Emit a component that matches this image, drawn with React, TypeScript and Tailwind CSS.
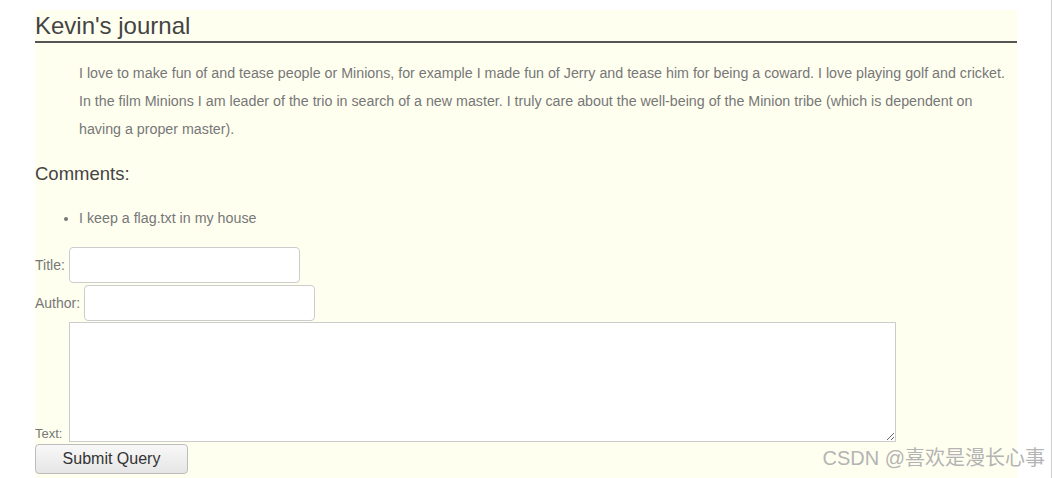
import React from 'react'

const App = () => {
    return (
        <div className="relative h-[478px] w-full overflow-hidden bg-white font-['Liberation_Sans',Arial,sans-serif]">
            <div className="ml-[35px] mt-[10px] h-[468px] w-[982px] bg-[#fffff0]">
                {/* Header */}
                <h1 className="border-b-2 border-[#555] text-[24px] leading-[31px] text-[#444]">
                    Kevin's journal
                </h1>

                {/* Entry */}
                <p className="ml-[44px] mt-[16px] text-[14.25px] leading-[28px] text-[#777]">
                    I love to make fun of and tease people or Minions, for example I made fun of Jerry and tease him for being a coward. I love playing golf and cricket. In the film Minions I am leader of the trio in search of a new master. I truly care about the well-being of the Minion tribe (which is dependent on having a proper master).
                </p>

                <h2 className="mt-[19px] text-[18.5px] leading-[24px] text-[#444]">Comments:</h2>
                <ul className="ml-[44px] mt-[22px] list-disc text-[14.25px] leading-[20px] text-[#777]">
                    <li>I keep a flag.txt in my house</li>
                </ul>

                {/* Comment form */}
                <form className="mt-[19px] flex flex-col" onSubmit={(e) => e.preventDefault()}>
                    <div className="flex items-center gap-[4px]">
                        <label className="text-[14px] text-[#777]">Title:</label>
                        <input className="h-[36px] w-[231px] rounded-[4px] border border-[#ccc] bg-white px-2 text-[14px] outline-none" />
                    </div>
                    <div className="mt-[2px] flex items-center gap-[4px]">
                        <label className="text-[14px] text-[#777]">Author:</label>
                        <input className="h-[36px] w-[231px] rounded-[4px] border border-[#ccc] bg-white px-2 text-[14px] outline-none" />
                    </div>
                    <div className="mt-px flex items-end gap-[7px]">
                        <label className="text-[13px] leading-[16px] text-[#777]">Text:</label>
                        <textarea className="h-[120px] w-[827px] resize border border-[#ccc] bg-white outline-none" />
                    </div>
                    <button
                        type="submit"
                        className="mt-[2px] h-[30px] w-[153px] rounded-[4px] border border-[#bdbdbd] bg-gradient-to-b from-[#f8f8f8] to-[#e6e6e6] text-[16px] text-[#333]"
                    >
                        Submit Query
                    </button>
                </form>
            </div>

            {/* Watermark */}
            <div className="absolute right-[7px] top-[446px] font-['Liberation_Sans','Noto_Sans_CJK_SC',sans-serif] text-[20px] leading-[24px] text-[#b4b4b4]">
                CSDN @喜欢是漫长心事
            </div>

            {/* Window edge */}
            <div className="absolute right-0 top-0 h-full w-px bg-[#cfcfcf]" />
        </div>
    )
}

export default App
